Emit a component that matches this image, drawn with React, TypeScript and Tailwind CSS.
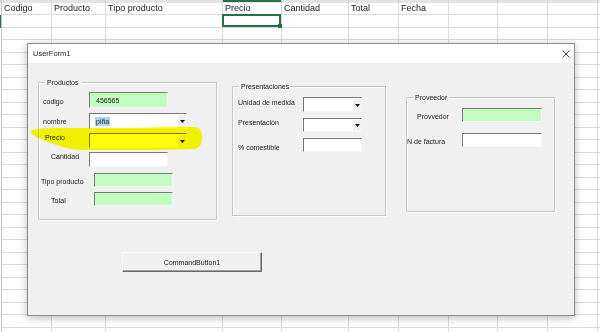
import React from "react";

const colW = ["w-[50px]", "w-[54px]", "w-[117px]", "w-[59px]", "w-[67px]", "w-[50px]", "w-[50px]", "w-[49px]", "w-[50px]", "w-[50px]"];
const headers = ["Codigo", "Producto", "Tipo producto", "Precio", "Cantidad", "Total", "Fecha", "", "", ""];

function Sheet() {
  const rows = Array.from({ length: 27 }, (_, i) => i);
  return (
    <div className="flex flex-col">
      {/* bottom edge of the column headers */}
      <div className="flex h-[3px] bg-[#e3e3e3]">
        <div className="w-[2px] border-r border-[#c6c6c6]" />
        {colW.map((w, i) => (
          <div key={i} className={`${w} border-r border-[#cfcfcf]`}>
            {i === 3 && <div className="h-[2px] bg-[#217346]" />}
          </div>
        ))}
        <div className="flex-1" />
      </div>
      {rows.map((r) => (
        <div key={r} className={`flex ${r === 0 ? "h-[12px]" : "h-[12.5px]"}`}>
          <div className={`w-[2px] border-r border-[#c6c6c6] ${r === 1 ? "bg-[#217346]" : ""}`} />
          {colW.map((w, i) => (
            <div key={i} className={`${w} relative border-r border-b border-[#dadada]`}>
              {r === 0 && headers[i] && (
                <span className="block pl-[2px] text-[9px] leading-[11px] text-[#222]">{headers[i]}</span>
              )}
              {r === 1 && i === 3 && (
                <div className="absolute -left-[1px] -top-[1px] -right-[0px] -bottom-[0px] z-10 border-2 border-[#217346]">
                  <div className="absolute -right-[3px] -bottom-[3px] h-[4px] w-[4px] bg-[#217346]" />
                </div>
              )}
            </div>
          ))}
          <div className="flex-1 border-b border-[#dadada]" />
        </div>
      ))}
    </div>
  );
}

const sunken = "border border-t-[#7a7a7a] border-l-[#7a7a7a] border-r-[#f6f6f6] border-b-[#f6f6f6]";

function TextBox({ w, h, green, value }: { w: string; h: string; green?: boolean; value?: string }) {
  return (
    <div className={`${w} ${h} ${sunken} ${green ? "bg-[#c2fdc2]" : "bg-white"} flex items-center pl-[6px] text-[7px] leading-[9px]`}>
      {value}
    </div>
  );
}

function Combo({ w, h, value }: { w: string; h: string; value?: string }) {
  return (
    <div className={`${w} ${h} ${sunken} flex bg-white`}>
      <div className="flex flex-1 items-center pl-[5px] text-[7px] leading-[9px]">
        {value && <span className="bg-[#a8d2f7] px-[1px]">{value}</span>}
      </div>
      <div className="flex w-[9px] items-center justify-center border-l border-t border-[#ffffff] border-r-[#a0a0a0] border-b-[#a0a0a0] bg-[#f0f0f0]">
        <svg width="5" height="3" viewBox="0 0 5 3">
          <polygon points="0,0 5,0 2.5,3" fill="#111" />
        </svg>
      </div>
    </div>
  );
}

function Row({ mt, h, lw, pl, lt, label, children }: { mt: string; h: string; lw: string; pl: string; lt: string; label: string; children: React.ReactNode }) {
  return (
    <div className={`flex items-start ${mt} ${h}`}>
      <span className={`${lw} ${pl} ${lt} shrink-0 whitespace-nowrap text-[7px] leading-[9px]`}>{label}</span>
      {children}
    </div>
  );
}

function Frame({ title, cls, children }: { title: string; cls: string; children: React.ReactNode }) {
  return (
    <div className={`relative flex flex-col border border-[#c6c6c6] shadow-[inset_1px_1px_0_#ffffff,1px_1px_0_#ffffff] ${cls}`}>
      <span className="absolute -top-[5px] left-[6px] bg-[#f0f0f0] px-[2px] text-[7px] leading-[9px]">{title}</span>
      {children}
    </div>
  );
}

export default function App() {
  return (
    <div className="relative h-[332px] w-[600px] overflow-hidden bg-white font-['Liberation_Sans',Arial,sans-serif]">
      <Sheet />

      {/* UserForm window */}
      <div className="absolute left-[27px] top-[43px] z-20 flex h-[273px] w-[548px] flex-col border border-[#8c8c8c] bg-[#f0f0f0] text-[#1a1a1a] shadow-[0_2px_8px_rgba(0,0,0,0.28)]">
        <div className="flex h-[19px] items-center justify-between bg-white pl-[5px] pr-[4px]">
          <span className="text-[7.5px] leading-[10px] text-[#222]">UserForm1</span>
          <svg width="8" height="8" viewBox="0 0 8 8">
            <path d="M0.5 0.5 L7.5 7.5 M7.5 0.5 L0.5 7.5" stroke="#333" strokeWidth="0.9" />
          </svg>
        </div>

        <div className="flex items-start">
          <Frame title="Productos" cls="ml-[10px] mt-[19px] w-[179px] h-[138px]">
            <Row mt="mt-[9px]" h="h-[16px]" lw="w-[50px]" pl="pl-[4px]" lt="mt-[5px]" label="codigo">
              <TextBox w="w-[79px]" h="h-[16px]" green value="456565" />
            </Row>
            <Row mt="mt-[5px]" h="h-[16px]" lw="w-[50px]" pl="pl-[4px]" lt="mt-[4px]" label="nombre">
              <Combo w="w-[98px]" h="h-[16px]" value="piña" />
            </Row>
            <Row mt="mt-[4px]" h="h-[15px]" lw="w-[50px]" pl="pl-[6px]" lt="mt-[0px]" label="Precio">
              <Combo w="w-[98px]" h="h-[15px]" />
            </Row>
            <Row mt="mt-[4px]" h="h-[15px]" lw="w-[50px]" pl="pl-[12px]" lt="mt-[0px]" label="Cantidad">
              <TextBox w="w-[79px]" h="h-[15px]" />
            </Row>
            <Row mt="mt-[6px]" h="h-[14px]" lw="w-[55px]" pl="pl-[2px]" lt="mt-[4px]" label="Tipo producto">
              <TextBox w="w-[79px]" h="h-[14px]" green />
            </Row>
            <Row mt="mt-[5px]" h="h-[14px]" lw="w-[55px]" pl="pl-[12px]" lt="mt-[4px]" label="Total">
              <TextBox w="w-[79px]" h="h-[14px]" green />
            </Row>
          </Frame>

          <Frame title="Presentaciones" cls="ml-[15px] mt-[23px] w-[154px] h-[130px]">
            <Row mt="mt-[10px]" h="h-[15px]" lw="w-[70px]" pl="pl-[5px]" lt="mt-[1px]" label="Unidad de medida">
              <Combo w="w-[59px]" h="h-[15px]" />
            </Row>
            <Row mt="mt-[6px]" h="h-[14px]" lw="w-[70px]" pl="pl-[5px]" lt="mt-[0px]" label="Presentación">
              <Combo w="w-[59px]" h="h-[14px]" />
            </Row>
            <Row mt="mt-[6px]" h="h-[14px]" lw="w-[70px]" pl="pl-[5px]" lt="mt-[5px]" label="% comestible">
              <TextBox w="w-[59px]" h="h-[14px]" />
            </Row>
          </Frame>

          <Frame title="Proveedor" cls="ml-[20px] mt-[34px] w-[149px] h-[115px]">
            <Row mt="mt-[10px]" h="h-[14px]" lw="w-[55px]" pl="pl-[10px]" lt="mt-[4px]" label="Provvedor">
              <TextBox w="w-[80px]" h="h-[14px]" green />
            </Row>
            <Row mt="mt-[11px]" h="h-[14px]" lw="w-[55px]" pl="pl-[0px]" lt="mt-[4px]" label="N de factura">
              <TextBox w="w-[80px]" h="h-[14px]" />
            </Row>
          </Frame>
        </div>

        <button className="ml-[94px] mt-[32px] flex h-[20px] w-[140px] items-center justify-center border border-t-[#f8f8f8] border-l-[#f8f8f8] border-r-[#696969] border-b-[#696969] bg-[#f0f0f0] text-[7px] leading-[9px] shadow-[inset_-1px_-1px_0_#a0a0a0]">
          CommandButton1
        </button>
      </div>

      {/* yellow highlighter stroke */}
      <svg className="pointer-events-none absolute left-[28px] top-[124px] z-30 mix-blend-multiply" width="176" height="30" viewBox="0 0 176 30">
        <path
          d="M3 7 C3 5 20 4 32 4 L92 4 C115 4 130 3 142 3 L166 3 C172 3 174 8 174 13 C174 20 172 24 166 25 L122 26 L62 26 C48 26 40 25 32 22 C22 19 12 15 5 11 C3 10 3 8 3 7 Z"
          fill="#ffff00"
        />
      </svg>
    </div>
  );
}
